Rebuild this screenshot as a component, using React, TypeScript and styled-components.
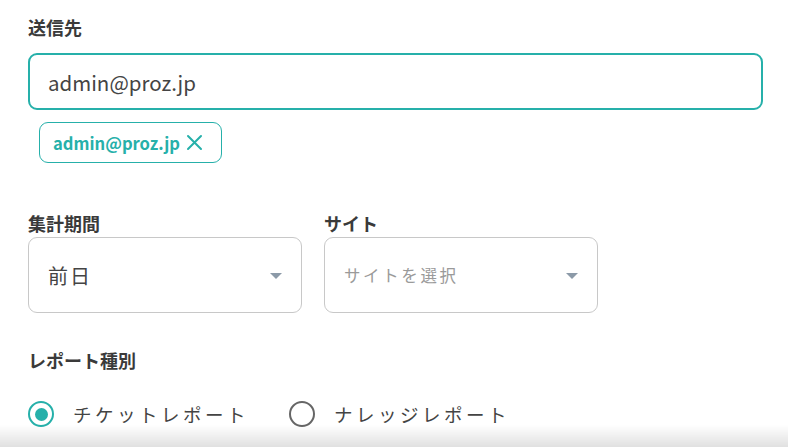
import React, { useState } from 'react'
import styled, { createGlobalStyle } from 'styled-components'

const teal = '#26b0aa'

const GlobalStyle = createGlobalStyle`
  body {
    margin: 0;
    background: #fff;
    font-family: "Noto Sans CJK JP", "Noto Sans", sans-serif;
    color: #444;
  }
`

const Form = styled.div`
  padding: 14px 25px 0 28px;
  display: flex;
  flex-direction: column;
`

const Label = styled.div`
  font-size: 18px;
  font-weight: 700;
  line-height: 26px;
  color: #3a3a3a;
  margin-bottom: 1px;
`

const Section = styled.div<{ gap?: number }>`
  margin-top: ${p => p.gap || 0}px;
`

const TextInput = styled.input`
  box-sizing: border-box;
  width: 735px;
  height: 57px;
  border: 2.5px solid ${teal};
  border-radius: 9px;
  padding: 0 18px;
  font-family: inherit;
  font-size: 20.5px;
  color: #444;
  outline: none;
  background: #fff;
`

const Chips = styled.div`
  display: flex;
  gap: 8px;
  margin: 12px 0 0 11px;
`

const Chip = styled.div`
  box-sizing: border-box;
  height: 41px;
  display: inline-flex;
  align-items: center;
  gap: 6px;
  padding: 0 18px 0 13px;
  border: 1.5px solid ${teal};
  border-radius: 9px;
  color: ${teal};
  font-size: 16.6px;
  font-weight: 700;
`

const Row = styled.div`
  display: flex;
  gap: 22px;
`

const Field = styled.div`
  display: flex;
  flex-direction: column;
`

const SelectBox = styled.div<{ placeholder?: boolean }>`
  box-sizing: border-box;
  width: 274px;
  height: 76px;
  border: 1px solid #c8c8c8;
  border-radius: 9px;
  display: flex;
  align-items: center;
  justify-content: space-between;
  padding: 0 19px;
  font-size: ${p => (p.placeholder ? '16.5px' : '20px')};
  letter-spacing: ${p => (p.placeholder ? '2.6px' : '2px')};
  color: ${p => (p.placeholder ? '#9a9a9a' : '#444')};
`

const Caret = styled.span`
  width: 0;
  height: 0;
  border-left: 6.5px solid transparent;
  border-right: 6.5px solid transparent;
  border-top: 6.5px solid #8c9aa8;
  margin-top: 2px;
`

const Radios = styled.div`
  display: flex;
  align-items: center;
  gap: 40px;
  margin-top: 28px;
`

const RadioItem = styled.label`
  display: inline-flex;
  align-items: center;
  gap: 19px;
  font-size: 18.5px;
  letter-spacing: 3.5px;
  color: #444;
  cursor: pointer;
`

const RadioCircle = styled.span<{ checked: boolean }>`
  box-sizing: border-box;
  width: 26px;
  height: 26px;
  border-radius: 50%;
  border: 2.5px solid ${p => (p.checked ? teal : '#666')};
  display: flex;
  align-items: center;
  justify-content: center;
  &::after {
    content: '';
    width: 13px;
    height: 13px;
    border-radius: 50%;
    background: ${teal};
    display: ${p => (p.checked ? 'block' : 'none')};
  }
`

// shadow of the footer bar below the scroll area
const BottomFade = styled.div`
  position: fixed;
  left: 0;
  right: 0;
  bottom: 0;
  height: 22px;
  background: linear-gradient(to bottom, rgba(0, 0, 0, 0), rgba(0, 0, 0, 0.12));
  pointer-events: none;
`

const CloseIcon = () => (
  <svg width="17" height="17" viewBox="0 0 17 17">
    <path d="M2 2 L15 15 M15 2 L2 15" stroke={teal} strokeWidth="2" strokeLinecap="round" />
  </svg>
)

export default function App() {
  const [email, setEmail] = useState('admin@proz.jp')
  const [kind, setKind] = useState('ticket')
  const kinds = [
    { key: 'ticket', label: 'チケットレポート' },
    { key: 'knowledge', label: 'ナレッジレポート' }
  ]
  return (
    <>
      <GlobalStyle />
      <Form>
        <Label>送信先</Label>
        <Section gap={12}>
          <TextInput value={email} onChange={e => setEmail(e.target.value)} />
        </Section>
        <Chips>
          <Chip>
            admin@proz.jp
            <CloseIcon />
          </Chip>
        </Chips>
        <Section gap={47}>
          <Row>
            <Field>
              <Label>集計期間</Label>
              <SelectBox>
                前日
                <Caret />
              </SelectBox>
            </Field>
            <Field>
              <Label>サイト</Label>
              <SelectBox placeholder>
                サイトを選択
                <Caret />
              </SelectBox>
            </Field>
          </Row>
        </Section>
        <Section gap={34}>
          <Label>レポート種別</Label>
          <Radios>
            {kinds.map(k => (
              <RadioItem key={k.key} onClick={() => setKind(k.key)}>
                <RadioCircle checked={kind === k.key} />
                {k.label}
              </RadioItem>
            ))}
          </Radios>
        </Section>
      </Form>
      <BottomFade />
    </>
  )
}
